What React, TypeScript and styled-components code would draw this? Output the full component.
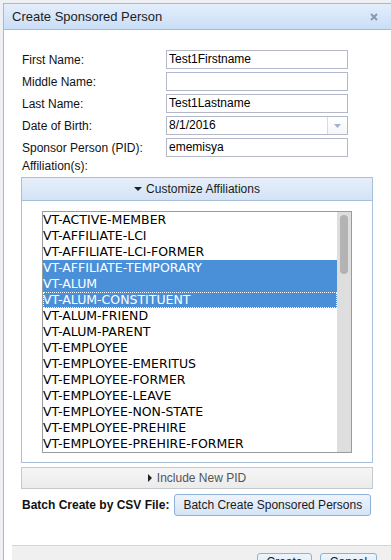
import React from "react";
import styled, { createGlobalStyle } from "styled-components";

const Global = createGlobalStyle`
  html, body { margin: 0; padding: 0; }
  body {
    background: #eef0f3;
    font-family: "Liberation Sans", Arial, sans-serif;
    font-size: 12px;
    color: #111;
    overflow: hidden;
  }
`;

const Page = styled.div`
  width: 391px;
  height: 560px;
  overflow: hidden;
  padding: 3px 0 0 3px;
  box-sizing: border-box;
`;

const Dialog = styled.div`
  width: 400px;
  height: 600px;
  background: #fff;
  border-left: 1px solid #99bbe8;
  border-top: 1px solid #99bbe8;
  display: flex;
  flex-direction: column;
`;

const TitleBar = styled.div`
  height: 25px;
  flex: none;
  display: flex;
  align-items: center;
  justify-content: space-between;
  padding: 0 26px 0 8px;
  background: linear-gradient(#e4eefb, #c9def7);
  border-bottom: 1px solid #99bbe8;
`;

const Title = styled.span`
  font-size: 13px;
  color: #1d1d1d;
`;

const Body = styled.div`
  padding: 20px 0 0 17px;
  width: 352px;
  display: flex;
  flex-direction: column;
`;

const FormGrid = styled.div`
  display: grid;
  grid-template-columns: 145px 182px;
  grid-auto-rows: 19px;
  row-gap: 3px;
  align-items: center;
`;

const Label = styled.label<{ $bold?: boolean }>`
  padding-left: 1px;
  font-size: 12px;
  font-weight: ${(p) => (p.$bold ? "bold" : "normal")};
  color: #111;
  white-space: nowrap;
`;

const TextInput = styled.div`
  height: 19px;
  box-sizing: border-box;
  border: 1px solid #b5b8c8;
  background: #fff;
  padding: 0 2px;
  font-size: 12px;
  line-height: 17px;
  color: #000;
  display: flex;
  align-items: center;
`;

const DateText = styled.span`
  flex: 1;
`;

const Trigger = styled.span`
  width: 19px;
  height: 17px;
  margin-right: -2px;
  border-left: 1px solid #d6dbe3;
  display: flex;
  align-items: center;
  justify-content: center;
  background: linear-gradient(#ffffff, #f4f6f9);
`;

const AffLabel = styled(Label)`
  margin-top: 1px;
  line-height: 16px;
`;

const Panel = styled.div<{ $gray?: boolean }>`
  margin-top: ${(p) => (p.$gray ? 4 : 3)}px;
  border: 1px solid ${(p) => (p.$gray ? "#c6c9cc" : "#a9bfd9")};
  display: flex;
  flex-direction: column;
`;

const PanelHeader = styled.div<{ $gray?: boolean }>`
  height: ${(p) => (p.$gray ? 20 : 22)}px;
  display: flex;
  align-items: center;
  justify-content: center;
  gap: 4px;
  font-size: 12px;
  color: ${(p) => (p.$gray ? "#555" : "#1a1a1a")};
  background: ${(p) =>
    p.$gray
      ? "linear-gradient(#f6f6f6, #ebebeb)"
      : "linear-gradient(#e6effa, #d3e3f6)"};
  border-bottom: ${(p) => (p.$gray ? "none" : "1px solid #a9bfd9")};
`;

const PanelBody = styled.div`
  padding: 10px 20px 9px 20px;
`;

const ListBox = styled.div`
  height: 242px;
  box-sizing: border-box;
  border: 1px solid #9b9b9b;
  display: flex;
  background: #fff;
`;

const Items = styled.div`
  flex: 1;
  overflow: hidden;
`;

const Item = styled.div<{ $sel?: boolean; $focus?: boolean }>`
  height: 16px;
  line-height: 16px;
  box-sizing: border-box;
  font-family: "DejaVu Sans", sans-serif;
  font-size: 12.5px;
  white-space: nowrap;
  color: ${(p) => (p.$sel ? "#fff" : "#000")};
  background: ${(p) => (p.$sel ? "#4a90d9" : "transparent")};
  outline: ${(p) => (p.$focus ? "1px dotted #fff" : "none")};
  outline-offset: -1px;
`;

const ScrollTrack = styled.div`
  width: 14px;
  background: #dedede;
  padding: 3px 3px;
  box-sizing: border-box;
`;

const ScrollThumb = styled.div`
  width: 8px;
  height: 59px;
  border-radius: 4px;
  background: #b3b3b3;
`;

const BatchRow = styled.div`
  margin-top: 5px;
  display: flex;
  align-items: center;
  gap: 5px;
`;

const Button = styled.button`
  height: 22px;
  box-sizing: border-box;
  border: 1px solid #8fb0d8;
  border-radius: 3px;
  background: linear-gradient(#eef4fc, #d4e4f7);
  font-family: "Liberation Sans", Arial, sans-serif;
  font-size: 12px;
  color: #1a1a1a;
  padding: 0 8px;
  cursor: pointer;
`;

const Footer = styled.div`
  margin-top: 29px;
  margin-left: 8px;
  flex: 1;
  background: #f0f0f0;
  border-top: 1px solid #d4d4d4;
  display: flex;
  align-items: flex-start;
  padding: 7px 0 0 245px;
  gap: 8px;
`;

const FooterButton = styled(Button)<{ $w: number }>`
  width: ${(p) => p.$w}px;
  padding: 0;
  line-height: 14px;
  padding-bottom: 4px;
`;

const Arrow = ({ dir }: { dir: "down" | "right" }) =>
  dir === "down" ? (
    <svg width="8" height="5" viewBox="0 0 8 5">
      <path d="M0 0 L8 0 L4 4 Z" fill="#222" />
    </svg>
  ) : (
    <svg width="5" height="8" viewBox="0 0 5 8">
      <path d="M0 0 L4 4 L0 8 Z" fill="#222" />
    </svg>
  );

const items = [
  "VT-ACTIVE-MEMBER",
  "VT-AFFILIATE-LCI",
  "VT-AFFILIATE-LCI-FORMER",
  "VT-AFFILIATE-TEMPORARY",
  "VT-ALUM",
  "VT-ALUM-CONSTITUENT",
  "VT-ALUM-FRIEND",
  "VT-ALUM-PARENT",
  "VT-EMPLOYEE",
  "VT-EMPLOYEE-EMERITUS",
  "VT-EMPLOYEE-FORMER",
  "VT-EMPLOYEE-LEAVE",
  "VT-EMPLOYEE-NON-STATE",
  "VT-EMPLOYEE-PREHIRE",
  "VT-EMPLOYEE-PREHIRE-FORMER",
];

const selected = new Set([3, 4, 5]);

export default function App() {
  return (
    <Page>
      <Global />
      <Dialog>
        <TitleBar>
          <Title>Create Sponsored Person</Title>
          <svg width="8" height="8" viewBox="0 0 8 8">
            <path d="M1 1 L7 7 M7 1 L1 7" stroke="#8599b3" strokeWidth="2" />
          </svg>
        </TitleBar>
        <Body>
          <FormGrid>
            <Label>First Name:</Label>
            <TextInput>Test1Firstname</TextInput>
            <Label>Middle Name:</Label>
            <TextInput />
            <Label>Last Name:</Label>
            <TextInput>Test1Lastname</TextInput>
            <Label>Date of Birth:</Label>
            <TextInput>
              <DateText>8/1/2016</DateText>
              <Trigger>
                <svg width="7" height="4" viewBox="0 0 7 4">
                  <path d="M0 0 L7 0 L3.5 4 Z" fill="#a3b3c8" />
                </svg>
              </Trigger>
            </TextInput>
            <Label>Sponsor Person (PID):</Label>
            <TextInput>ememisya</TextInput>
          </FormGrid>
          <AffLabel>Affiliation(s):</AffLabel>
          <Panel>
            <PanelHeader>
              <Arrow dir="down" />
              Customize Affiliations
            </PanelHeader>
            <PanelBody>
              <ListBox>
                <Items>
                  {items.map((it, i) => (
                    <Item key={it} $sel={selected.has(i)} $focus={i === 5}>
                      {it}
                    </Item>
                  ))}
                </Items>
                <ScrollTrack>
                  <ScrollThumb />
                </ScrollTrack>
              </ListBox>
            </PanelBody>
          </Panel>
          <Panel $gray>
            <PanelHeader $gray>
              <Arrow dir="right" />
              Include New PID
            </PanelHeader>
          </Panel>
          <BatchRow>
            <Label $bold>Batch Create by CSV File:</Label>
            <Button>Batch Create Sponsored Persons</Button>
          </BatchRow>
        </Body>
        <Footer>
          <FooterButton $w={55}>Create</FooterButton>
          <FooterButton $w={57}>Cancel</FooterButton>
        </Footer>
      </Dialog>
    </Page>
  );
}
